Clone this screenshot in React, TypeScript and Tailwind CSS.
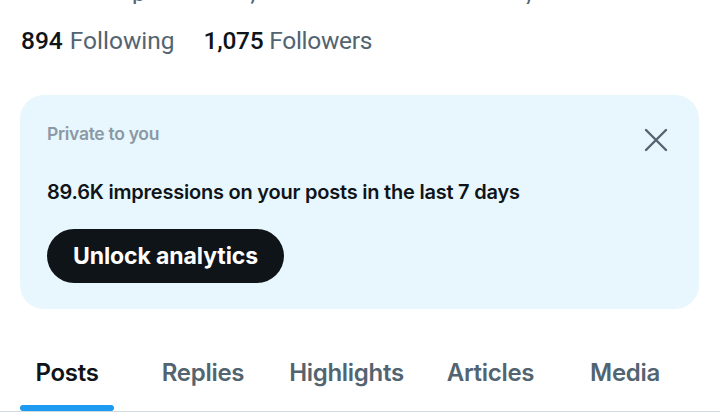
import React from "react";

const tabs = [
  { label: "Posts", w: "w-[134px]", active: true },
  { label: "Replies", w: "w-[138px]", active: false },
  { label: "Highlights", w: "w-[149px]", active: false },
  { label: "Articles", w: "w-[139px]", active: false },
  { label: "Media", w: "w-[130px]", active: false },
];

export default function App() {
  return (
    <div className="w-[720px] h-[419px] bg-white overflow-hidden flex flex-col" style={{ fontFamily: "Roboto, 'Liberation Sans', sans-serif" }}>
      {/* cut-off previous line: only descenders visible */}
      <div className="h-[4px] overflow-hidden">
        <div className="flex -mt-[20px] h-[26px] text-[24px] leading-[26px] text-[#536471]">
          <span className="ml-[132px]">p</span>
          <span className="ml-[105px]">,</span>
          <span className="ml-[268px]">y</span>
        </div>
      </div>

      {/* stats */}
      <div className="flex items-center gap-[29px] pl-[21px] mt-[22px] h-[30px] text-[24.5px] leading-[30px]">
        <div className="flex gap-[7px]">
          <span className="font-medium text-[#0f1419]">894</span>
          <span className="text-[#536471]">Following</span>
        </div>
        <div className="flex gap-[6px] tracking-[-0.3px]">
          <span className="font-medium text-[#0f1419]">1,075</span>
          <span className="text-[#536471]">Followers</span>
        </div>
      </div>

      {/* card */}
      <div className="ml-[20px] mt-[39px] h-[214px] w-[679px] rounded-[24px] bg-[#e8f7fd] flex flex-col pl-[27px] pr-[31px] pt-[27px]" style={{ fontFamily: "Inter, Roboto, sans-serif" }}>
        <div className="flex justify-between items-start">
          <div className="text-[17.5px] leading-[24px] font-semibold text-[#8b98a5] tracking-[-0.3px]">Private to you</div>
          <svg viewBox="0 0 24 24" className="w-[24px] h-[24px] mt-[6px]" fill="none" stroke="#536471" strokeWidth="2.4" strokeLinecap="round">
            <path d="M2 2 L22 22 M22 2 L2 22" />
          </svg>
        </div>
        <div className="mt-[27px] text-[20px] leading-[26px] font-semibold text-[#0f1419] tracking-[-0.22px]">
          89.6K impressions on your posts in the last 7 days
        </div>
        <div className="mt-[24px] flex">
          <div className="flex items-center justify-center h-[54px] w-[237px] rounded-full bg-[#0f1419] text-white text-[23px] font-bold tracking-[-0.1px]">
            Unlock analytics
          </div>
        </div>
      </div>

      {/* tabs */}
      <div className="mt-[43px] flex border-b border-[#cfd9de] h-[60px]" style={{ fontFamily: "Inter, Roboto, sans-serif" }}>
        {tabs.map((t) => (
          <div key={t.label} className={`${t.w} relative flex justify-center pt-[6px]`}>
            <span className={`text-[24px] leading-[30px] font-semibold tracking-[-0.3px] ${t.active ? "text-[#0f1419]" : "text-[#536471]"}`}>
              {t.label}
            </span>
            {t.active && (
              <div className="absolute bottom-0 left-[20px] w-[94px] h-[6px] rounded-full bg-[#1d9bf0]" />
            )}
          </div>
        ))}
      </div>
    </div>
  );
}
